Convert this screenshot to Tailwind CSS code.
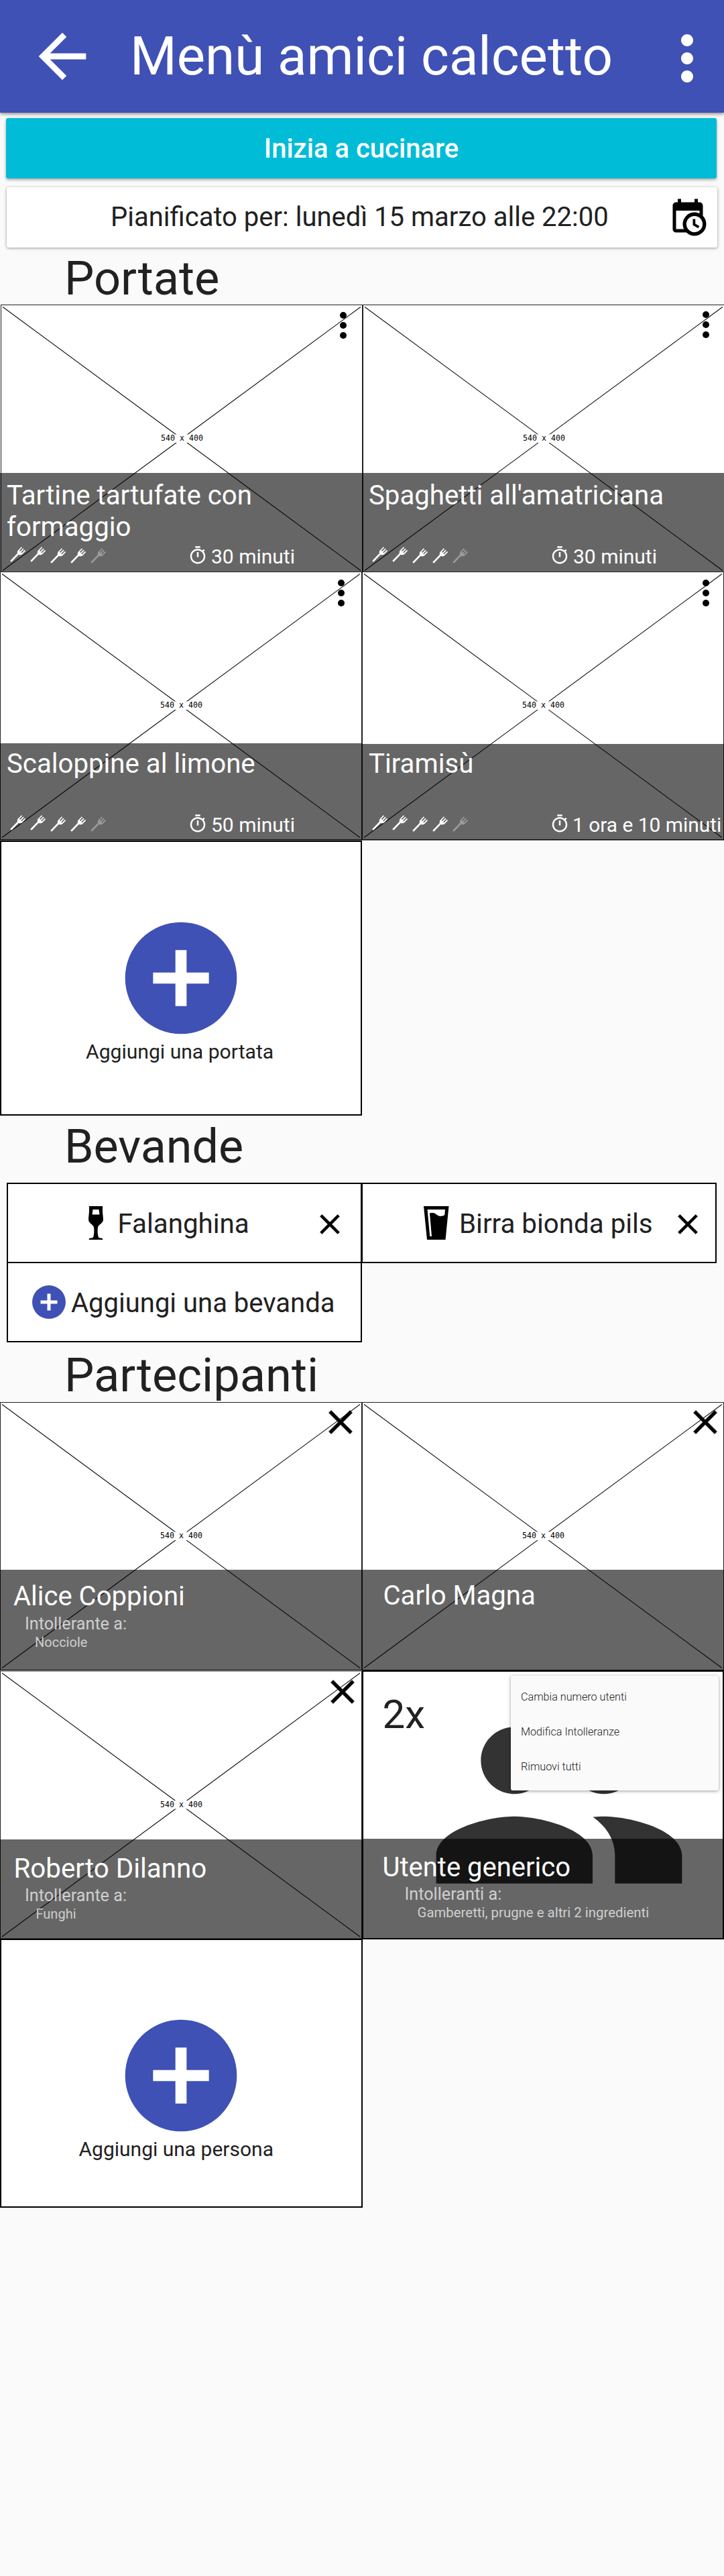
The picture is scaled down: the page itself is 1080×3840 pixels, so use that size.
<!DOCTYPE html>
<html lang="it">
<head>
<meta charset="utf-8">
<title>Menù amici calcetto</title>
<script src="https://cdn.jsdelivr.net/npm/@tailwindcss/browser@4"></script>
</head>
<body class="w-[1080px] h-[3840px] overflow-x-hidden bg-[#fafafa] font-[Roboto,sans-serif] text-[#212121]">

<!-- shared icons -->
<svg class="hidden" xmlns="http://www.w3.org/2000/svg">
  <symbol id="placeholder" viewBox="0 0 540 400">
    <rect width="540" height="400" fill="#fff"/>
    <rect x=".5" y=".5" width="539" height="399" fill="none" stroke="#222"/>
    <path d="M3 3.5L537 396.5M537 3.5L3 396.5" stroke="#111" stroke-width="1.1"/>
    <rect x="238" y="193.500" width="64" height="12.500" fill="#fff"/>
    <text x="270.500" y="203" text-anchor="middle" font-family="DejaVu Sans Mono, monospace" font-size="11.600" fill="#000">540 x 400</text>
  </symbol>
  <symbol id="close" viewBox="0 0 24 24"><path d="M19,6.41L17.59,5L12,10.59L6.41,5L5,6.41L10.59,12L5,17.59L6.41,19L12,13.41L17.59,19L19,17.59L13.41,12L19,6.41Z" stroke="currentColor" stroke-width=".3"/></symbol>
  <symbol id="dots" viewBox="0 0 10 40"><circle cx="5" cy="5" r="5"/><circle cx="5" cy="20" r="5"/><circle cx="5" cy="35" r="5"/></symbol>
  <symbol id="fork" viewBox="0 0 24 24">
    <path d="M1.200 22.800L13 10.500" stroke="currentColor" stroke-width="2.800" fill="none"/>
    <path d="M11.500 7C10.800 10 11.600 11.600 12.600 12C14 13.300 16 12.700 17.400 12.500L19 10.800L13.500 5Z"/>
    <path d="M12.600 6.800L18.300 .800M15.600 8.800L21 3.300M17.800 11.600L23.500 5.700" stroke="currentColor" stroke-width="1.800" fill="none"/>
  </symbol>
  <symbol id="timer" viewBox="0 0 24 24"><path d="M15 1H9v2h6V1zm-4 13h2V8h-2v6zm8.030-6.610l1.420-1.420c-.43-.51-.9-.99-1.410-1.410l-1.420 1.420C16.070 4.740 14.120 4 12 4c-4.970 0-9 4.030-9 9s4.020 9 9 9 9-4.030 9-9c0-2.120-.74-4.070-1.970-5.610zM12 20c-3.870 0-7-3.130-7-7s3.130-7 7-7 7 3.130 7 7-3.130 7-7 7z"/></symbol>
  <symbol id="add" viewBox="0 0 24 24"><path d="M17,13H13V17H11V13H7V11H11V7H13V11H17M12,2A10,10 0 0,0 2,12A10,10 0 0,0 12,22A10,10 0 0,0 22,12A10,10 0 0,0 12,2Z"/></symbol>
</svg>

<header class="relative flex h-[168px] items-center bg-[#3f51b5] pl-[40px] text-white shadow-[0_2px_5px_rgba(0,0,0,0.45)]">
  <svg class="size-[106px] shrink-0 fill-current" viewBox="0 0 24 24"><path d="M20 11H7.830l5.590-5.590L12 4l-8 8 8 8 1.410-1.410L7.830 13H20v-2z"/></svg>
  <h1 class="ml-[48px] whitespace-nowrap text-[79.900px] leading-[168px]">Menù amici calcetto</h1>
  <svg class="ml-auto mr-px mt-[6px] size-[108px] shrink-0 fill-current" viewBox="0 0 24 24"><path d="M12 8c1.100 0 2-.9 2-2s-.9-2-2-2-2 .9-2 2 .9 2 2 2zm0 2c-1.100 0-2 .9-2 2s.9 2 2 2 2-.9 2-2-.9-2-2-2zm0 6c-1.100 0-2 .9-2 2s.9 2 2 2 2-.9 2-2-.9-2-2-2z"/></svg>
</header>

<button class="mt-[8px] ml-[9px] block h-[90px] w-[1060px] rounded-[3px] bg-[#00bcd7] pt-px text-center text-[40px] leading-[90px] font-medium text-white shadow-[0_2px_4px_rgba(0,0,0,0.35)]">Inizia a cucinare</button>

<div class="mt-[13px] ml-[10px] flex h-[90px] w-[1060px] items-center rounded-[3px] bg-white pl-[155px] shadow-[0_1px_4px_rgba(0,0,0,0.4)]">
  <span class="whitespace-nowrap text-[40px] leading-[90px]">Pianificato per: lunedì 15 marzo alle 22:00</span>
  <svg class="ml-auto mr-[14px] size-[60px] shrink-0 fill-black" viewBox="0 0 24 24"><path d="M15,13H16.500V15.820L18.940,17.230L18.190,18.530L15,16.690V13M19,8H5V19H9.670C9.240,18.090 9,17.070 9,16A7,7 0 0,1 16,9C17.070,9 18.090,9.240 19,9.670V8M5,21C3.890,21 3,20.100 3,19V5C3,3.890 3.890,3 5,3H6V1H8V3H16V1H18V3H19A2,2 0 0,1 21,5V11.100C22.240,12.360 23,14.090 23,16A7,7 0 0,1 16,23C14.090,23 12.360,22.240 11.100,21H5M16,11.150A4.850,4.850 0 0,0 11.150,16C11.150,18.680 13.320,20.850 16,20.850A4.850,4.850 0 0,0 20.850,16C20.850,13.320 18.680,11.150 16,11.150Z"/></svg>
</div>

<h2 class="h-[85px] pt-[8px] pl-[96px] text-[70.400px] leading-[77px]">Portate</h2>

<section>
  <div class="grid grid-cols-2">
    <article class="relative h-[399px]">
      <svg class="absolute top-0 left-px h-[400px] w-[540px]"><use href="#placeholder"/></svg>
      <svg class="absolute top-[11px] left-[507px] h-[40px] w-[10px]"><use href="#dots"/></svg>
      <div class="absolute inset-x-0 bottom-0 flex h-[148px] flex-col bg-black/60 pt-[10px] pb-[5px] pl-[10px] text-white">
        <h3 class="w-[460px] text-[40.200px] leading-[47px]">Tartine tartufate con formaggio</h3>
        <div class="mt-auto flex h-[36px] items-start pl-[5px]">
          <div class="flex w-[265px] gap-[7px] pt-[3px] fill-current">
            <svg class="size-[23px]"><use href="#fork"/></svg><svg class="size-[23px]"><use href="#fork"/></svg><svg class="mt-[2px] size-[23px]"><use href="#fork"/></svg><svg class="mt-[2px] size-[23px]"><use href="#fork"/></svg><svg class="mt-[2px] size-[23px] opacity-35"><use href="#fork"/></svg>
          </div>
          <svg class="mt-px size-[30px] shrink-0 fill-current"><use href="#timer"/></svg>
          <span class="ml-[5px] whitespace-nowrap text-[30px] leading-[36px]">30 minuti</span>
        </div>
      </div>
    </article>
    <article class="relative h-[399px]">
      <svg class="absolute top-0 left-px h-[400px] w-[540px]"><use href="#placeholder"/></svg>
      <svg class="absolute top-[10px] left-[507.500px] h-[40px] w-[10px]"><use href="#dots"/></svg>
      <div class="absolute inset-x-0 bottom-0 flex h-[148px] flex-col bg-black/60 pt-[10px] pb-[5px] pl-[10px] text-white">
        <h3 class="w-[460px] text-[40.200px] leading-[47px]">Spaghetti all'amatriciana</h3>
        <div class="mt-auto flex h-[36px] items-start pl-[5px]">
          <div class="flex w-[265px] gap-[7px] pt-[3px] fill-current">
            <svg class="size-[23px]"><use href="#fork"/></svg><svg class="size-[23px]"><use href="#fork"/></svg><svg class="mt-[2px] size-[23px]"><use href="#fork"/></svg><svg class="mt-[2px] size-[23px]"><use href="#fork"/></svg><svg class="mt-[2px] size-[23px] opacity-35"><use href="#fork"/></svg>
          </div>
          <svg class="mt-px size-[30px] shrink-0 fill-current"><use href="#timer"/></svg>
          <span class="ml-[5px] whitespace-nowrap text-[30px] leading-[36px]">30 minuti</span>
        </div>
      </div>
    </article>
  </div>
  <div class="grid grid-cols-2">
    <article class="relative h-[400px]">
      <svg class="absolute -top-px left-0 h-[400px] w-[540px]"><use href="#placeholder"/></svg>
      <svg class="absolute top-[11px] left-[503.500px] h-[40px] w-[10px]"><use href="#dots"/></svg>
      <div class="absolute inset-x-0 bottom-0 flex h-[145px] flex-col bg-black/60 pt-[7px] pb-[5px] pl-[10px] text-white">
        <h3 class="w-[460px] text-[40.200px] leading-[47px]">Scaloppine al limone</h3>
        <div class="mt-auto flex h-[36px] items-start pl-[5px]">
          <div class="flex w-[265px] gap-[7px] pt-[3px] fill-current">
            <svg class="size-[23px]"><use href="#fork"/></svg><svg class="size-[23px]"><use href="#fork"/></svg><svg class="mt-[2px] size-[23px]"><use href="#fork"/></svg><svg class="mt-[2px] size-[23px]"><use href="#fork"/></svg><svg class="mt-[2px] size-[23px] opacity-35"><use href="#fork"/></svg>
          </div>
          <svg class="mt-px size-[30px] shrink-0 fill-current"><use href="#timer"/></svg>
          <span class="ml-[5px] whitespace-nowrap text-[30px] leading-[36px]">50 minuti</span>
        </div>
      </div>
    </article>
    <article class="relative h-[400px]">
      <svg class="absolute -top-px left-0 h-[400px] w-[540px]"><use href="#placeholder"/></svg>
      <svg class="absolute top-[11px] left-[507.500px] h-[40px] w-[10px]"><use href="#dots"/></svg>
      <div class="absolute inset-x-0 bottom-0 flex h-[144px] flex-col bg-black/60 pt-[6px] pb-[5px] pl-[10px] text-white">
        <h3 class="w-[460px] text-[40.200px] leading-[47px]">Tiramisù</h3>
        <div class="mt-auto flex h-[36px] items-start pl-[5px]">
          <div class="flex w-[265px] shrink-0 gap-[7px] pt-[3px] fill-current">
            <svg class="size-[23px]"><use href="#fork"/></svg><svg class="size-[23px]"><use href="#fork"/></svg><svg class="mt-[2px] size-[23px]"><use href="#fork"/></svg><svg class="mt-[2px] size-[23px]"><use href="#fork"/></svg><svg class="mt-[2px] size-[23px] opacity-35"><use href="#fork"/></svg>
          </div>
          <svg class="mt-px size-[30px] shrink-0 fill-current"><use href="#timer"/></svg>
          <span class="ml-[4px] whitespace-nowrap text-[29.900px] leading-[36px]">1 ora e 10 minuti</span>
        </div>
      </div>
    </article>
  </div>
  <div class="relative flex h-[410px] w-[540px] flex-col border-2 border-black bg-white pt-[103px]">
    <svg class="ml-[168px] size-[200px] shrink-0 fill-[#3f51b5]"><use href="#add"/></svg>
    <span class="-mt-[8px] pl-[126px] text-[30.100px] leading-[36px]">Aggiungi una portata</span>
  </div>
</section>

<h2 class="h-[100px] pl-[96px] text-[70px] leading-[92px]">Bevande</h2>

<section class="ml-[10px] w-[1060px] text-[40.300px] leading-[47px] whitespace-nowrap">
  <div class="flex">
    <div class="flex h-[120px] w-[530px] items-center border-2 border-black bg-white pl-[101px]">
      <svg class="size-[60px] shrink-0" viewBox="0 0 24 24"><path fill-rule="evenodd" d="M7.900 2H16.100C15.700 5 16.400 8 16.400 10C16.400 12.300 13.600 12.800 13.200 14.600C12.900 16.500 13 19 13.600 20.600C14.200 21.100 16.100 21 16.100 21.500V22H7.900V21.500C7.900 21 9.800 21.100 10.400 20.600C11 19 11.100 16.500 10.800 14.600C10.400 12.800 7.600 12.300 7.600 10C7.600 8 8.300 5 7.900 2ZM10.200 4L9.800 7H14.200L13.800 4Z"/></svg>
      <span class="mt-[2px] ml-[2.500px]">Falanghina</span>
      <svg class="mt-[4px] mr-[21px] ml-auto size-[50px]"><use href="#close"/></svg>
    </div>
    <div class="-ml-px flex h-[120px] w-[530px] items-center border-2 border-black bg-white pl-[81px]">
      <svg class="size-[60px] shrink-0" viewBox="0 0 24 24"><path fill-rule="evenodd" d="M4 2L6 22H17L19 2ZM6.200 4H16.800L16.500 7.300C15 8.100 13.200 8.200 12.200 7.400C11.300 6.700 10.400 6 9.400 6C8.700 6 8 6 7.600 6.300L8.800 20H7.700Z"/></svg>
      <span class="mt-[2px] ml-[3px]">Birra bionda pils</span>
      <svg class="mt-[4px] mr-[16px] ml-auto size-[50px]"><use href="#close"/></svg>
    </div>
  </div>
  <div class="-mt-[2px] flex h-[120px] w-[530px] items-center border-2 border-black bg-white pl-[31px]">
    <svg class="size-[60px] shrink-0 fill-[#3f51b5]"><use href="#add"/></svg>
    <span class="mt-[2px] ml-[3px] text-[40px]">Aggiungi una bevanda</span>
  </div>
</section>

<h2 class="h-[89px] pt-[9px] pl-[96px] text-[70.400px] leading-[80px]">Partecipanti</h2>

<section>
  <div class="grid grid-cols-2">
    <article class="relative h-[400px]">
      <svg class="absolute top-0 left-0 h-[400px] w-[540px]"><use href="#placeholder"/></svg>
      <svg class="absolute top-0 left-[478px] size-[60px]"><use href="#close"/></svg>
      <div class="absolute inset-x-0 bottom-0 flex h-[150px] flex-col bg-black/60 pt-[16px] text-[#cfcfcf]">
        <h3 class="pl-[20px] text-[40px] leading-[47px] text-white">Alice Coppioni</h3>
        <p class="mt-[3px] pl-[37px] text-[25.200px] leading-[29px]">Intollerante a:</p>
        <p class="mt-[2px] pl-[52px] text-[20px] leading-[23px]">Nocciole</p>
      </div>
    </article>
    <article class="relative h-[400px]">
      <svg class="absolute top-0 left-0 h-[400px] w-[540px]"><use href="#placeholder"/></svg>
      <svg class="absolute top-0 left-[482px] size-[60px]"><use href="#close"/></svg>
      <div class="absolute inset-x-0 bottom-0 flex h-[150px] flex-col bg-black/60 pt-[15px]">
        <h3 class="pl-[31.500px] text-[40.100px] leading-[47px] text-white">Carlo Magna</h3>
      </div>
    </article>
  </div>
  <div class="grid grid-cols-2">
    <article class="relative h-[401px]">
      <svg class="absolute top-0 left-0 h-[401px] w-[540px]"><use href="#placeholder"/></svg>
      <svg class="absolute top-[2px] left-[481px] size-[60px]"><use href="#close"/></svg>
      <div class="absolute inset-x-0 bottom-0 flex h-[149px] flex-col bg-black/60 pt-[20px] text-[#cfcfcf]">
        <h3 class="pl-[20.500px] text-[40.300px] leading-[47px] text-white">Roberto Dilanno</h3>
        <p class="mt-[2px] pl-[37px] text-[25.200px] leading-[29px]">Intollerante a:</p>
        <p class="mt-[2px] pl-[53.500px] text-[20px] leading-[23px]">Funghi</p>
      </div>
    </article>
    <article class="relative h-[401px] border-2 border-black bg-white">
      <span class="absolute top-[29px] left-[28.500px] text-[60px] leading-[70px]">2x</span>
      <svg class="absolute -top-px left-[91.600px] size-[400px] fill-[#333]" viewBox="0 0 24 24"><path d="M16 11c1.660 0 2.990-1.340 2.990-3S17.660 5 16 5c-1.660 0-3 1.340-3 3s1.340 3 3 3zm-8 0c1.660 0 2.990-1.340 2.990-3S9.660 5 8 5C6.340 5 5 6.340 5 8s1.340 3 3 3zm0 2c-2.330 0-7 1.170-7 3.500V19h14v-2.500c0-2.330-4.670-3.500-7-3.500zm8 0c-.29 0-.62.020-.97.050 1.160.840 1.970 1.970 1.970 3.450V19h6v-2.500c0-2.330-4.670-3.500-7-3.500z"/></svg>
      <div class="absolute inset-x-0 bottom-0 flex h-[148px] flex-col bg-black/60 pt-[19px] whitespace-nowrap text-[#cfcfcf]">
        <h3 class="pl-[28.500px] text-[40px] leading-[47px] text-white">Utente generico</h3>
        <p class="mt-[2px] pl-[61.500px] text-[25.200px] leading-[29px]">Intolleranti a:</p>
        <p class="mt-[2px] pl-[80.500px] text-[20.400px] leading-[23px]">Gamberetti, prugne e altri 2 ingredienti</p>
      </div>
      <!-- context menu -->
      <ul class="absolute top-[6px] left-[220px] h-[171px] w-[310px] rounded-[3px] bg-[#fafafa] pt-[6px] pl-[15px] text-[16.200px] leading-[52px] font-light shadow-[0_1px_5px_rgba(0,0,0,0.4)]">
        <li>Cambia numero utenti</li>
        <li>Modifica Intolleranze</li>
        <li>Rimuovi tutti</li>
      </ul>
    </article>
  </div>
  <div class="relative -mt-px flex h-[401px] w-[541px] flex-col border-2 border-black bg-white pt-[102px]">
    <svg class="ml-[168px] size-[200px] shrink-0 fill-[#3f51b5]"><use href="#add"/></svg>
    <span class="-mt-[8px] pl-[115.500px] text-[30px] leading-[36px]">Aggiungi una persona</span>
  </div>
</section>
</body>
</html>
